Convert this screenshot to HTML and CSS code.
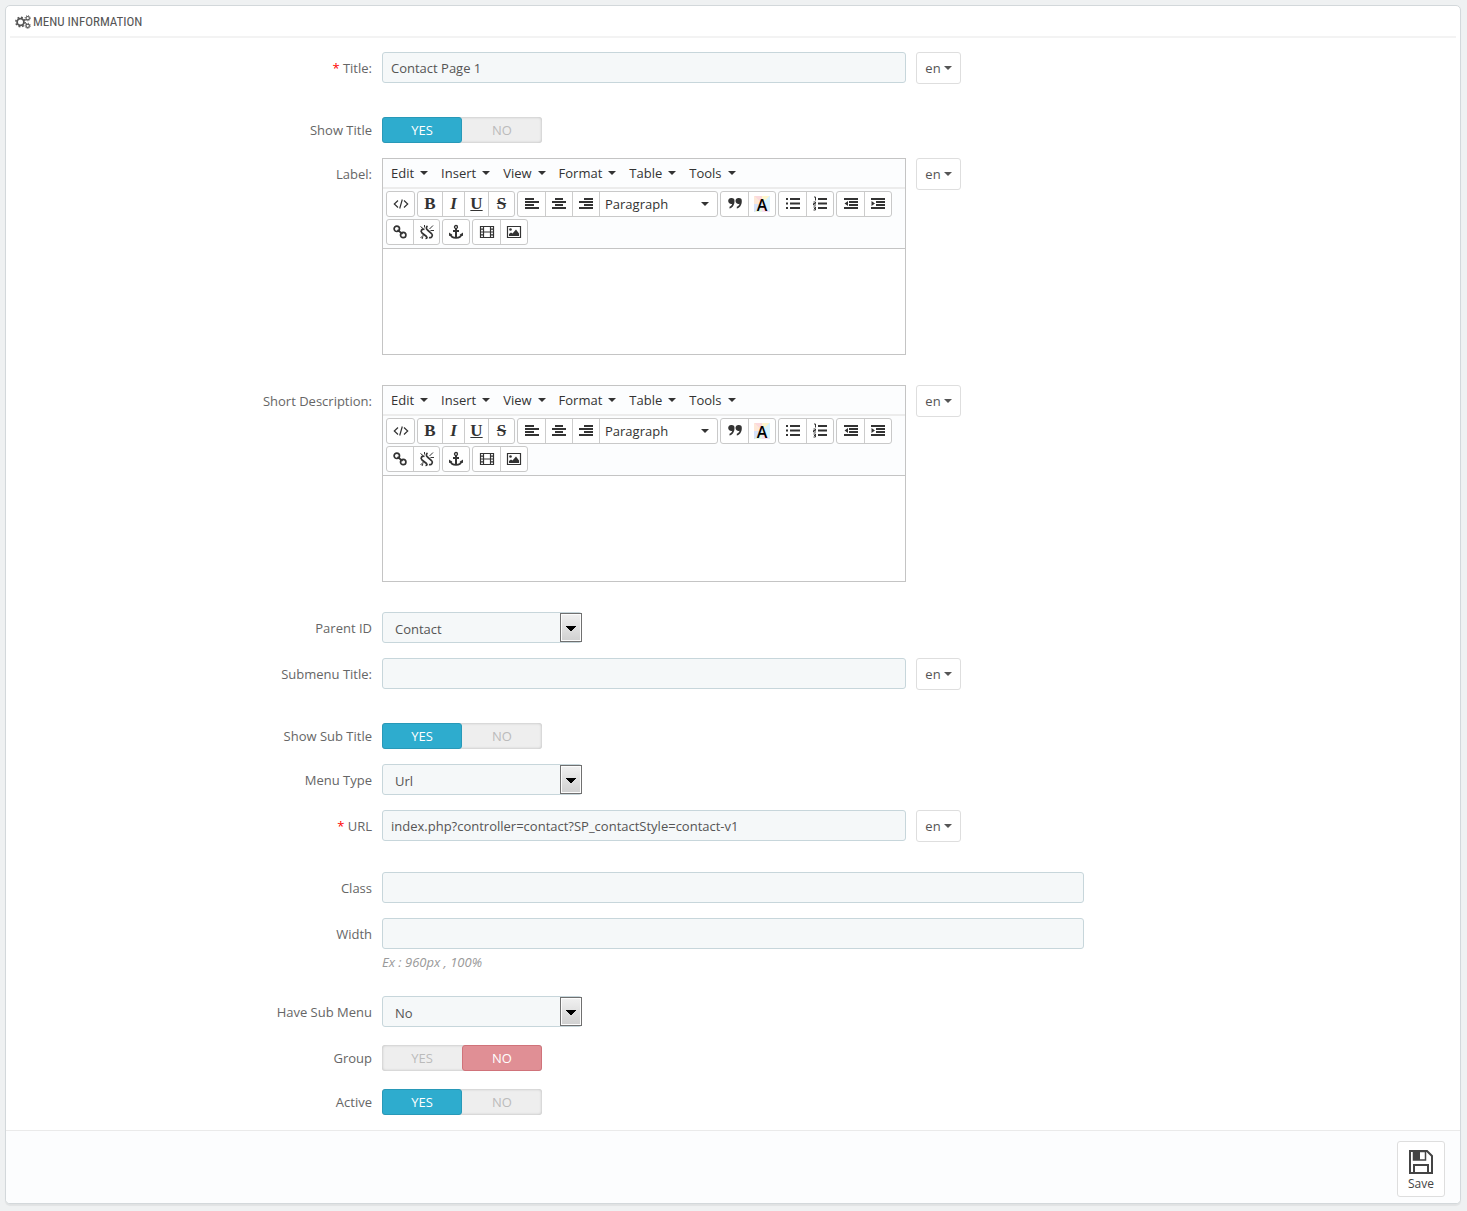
FILE: index.html
```html
<!DOCTYPE html>
<html lang="en">
<head>
<meta charset="utf-8">
<meta name="viewport" content="width=device-width, initial-scale=1">
<title>Menu information</title>
<link rel="stylesheet" href="styles.css">
</head>
<body>
<svg class="sprite" aria-hidden="true">
  <symbol id="i-cogs" viewBox="0 0 16 14">
    <circle cx="5.500" cy="7" r="3.400" fill="none" stroke="currentColor" stroke-width="1.800"/>
    <circle cx="5.500" cy="7" r="4.700" fill="none" stroke="currentColor" stroke-width="1.500" stroke-dasharray="1.850 1.840"/>
    <circle cx="12.700" cy="3.200" r="1.700" fill="none" stroke="currentColor" stroke-width="1.100"/>
    <circle cx="12.700" cy="3.200" r="2.600" fill="none" stroke="currentColor" stroke-width="1" stroke-dasharray="1 1.040"/>
    <circle cx="12.700" cy="10.800" r="1.700" fill="none" stroke="currentColor" stroke-width="1.100"/>
    <circle cx="12.700" cy="10.800" r="2.600" fill="none" stroke="currentColor" stroke-width="1" stroke-dasharray="1 1.040"/>
  </symbol>
  <symbol id="i-code" viewBox="0 0 16 16"><path d="M5 4.500 1.300 8 5 11.500M11 4.500 14.700 8 11 11.500M9.300 3.500 6.700 12.500" fill="none" stroke="currentColor" stroke-width="1.200"/></symbol>
  <symbol id="i-left" viewBox="0 0 16 16"><path d="M1 2h9v2H1zM1 5h14v2H1zM1 8h9v2H1zM1 11h14v2H1z"/></symbol>
  <symbol id="i-center" viewBox="0 0 16 16"><path d="M4 2h8v2H4zM1 5h14v2H1zM4 8h8v2H4zM1 11h14v2H1z"/></symbol>
  <symbol id="i-right" viewBox="0 0 16 16"><path d="M6 2h9v2H6zM1 5h14v2H1zM6 8h9v2H6zM1 11h14v2H1z"/></symbol>
  <symbol id="i-quote" viewBox="0 0 16 16"><path d="M4.500 2a3 3 0 0 1 3 3.200c0 3.800-2.200 6.800-5 7.300v-1.700c1.500-.5 2.500-1.600 2.700-3A3 3 0 1 1 4.500 2zM11.800 2a3 3 0 0 1 3 3.200c0 3.800-2.200 6.800-5 7.300v-1.700c1.500-.5 2.500-1.600 2.700-3a3 3 0 1 1-.7-5.800z"/></symbol>
  <symbol id="i-bullets" viewBox="0 0 16 16"><path d="M1 2h2v2H1zM5 2h10v2H5zM1 6.500h2v2H1zM5 6.500h10v2H5zM1 11h2v2H1zM5 11h10v2H5z"/></symbol>
  <symbol id="i-numbers" viewBox="0 0 16 16"><path d="M6 2h9v2H6zM6 6.500h9v2H6zM6 11h9v2H6z"/><path d="M2 1h1.500v3.500M1.500 6h2v1.500h-2v1.500h2.500M1.500 11h2v1.500h-1.500M3.500 12.500v1.500h-2" fill="none" stroke="currentColor"/></symbol>
  <symbol id="i-outdent" viewBox="0 0 16 16"><path d="M1 2h14v2H1zM6 5h9v2H6zM6 8h9v2H6zM1 11h14v2H1zM5 5v5L1.500 7.500z"/></symbol>
  <symbol id="i-indent" viewBox="0 0 16 16"><path d="M1 2h14v2H1zM6 5h9v2H6zM6 8h9v2H6zM1 11h14v2H1zM1.500 5v5L5 7.500z"/></symbol>
  <symbol id="i-link" viewBox="0 0 16 16"><g fill="none" stroke="currentColor" stroke-width="1.700"><circle cx="4.800" cy="4.800" r="2.700"/><circle cx="11.200" cy="11" r="2.700"/><path d="M5.500 5.800 10.500 10"/></g></symbol>
  <symbol id="i-unlink" viewBox="0 0 16 16"><path d="M5.500 5.500C3 4.500 1 7 3 9l4.500 3.500c1 1 .5 2-1 2M8.500 2C7 3 7 5 8.500 6l4 3.500c2 2 0 5-2.500 4" fill="none" stroke="currentColor" stroke-width="1.700"/><path d="M5.500 1v2.500M1.500 2.500 4 4.500M10.500 5 14 1.500M11.500 6.500H15M5 10.500 1.500 14M4 12.500 3 15" fill="none" stroke="currentColor"/></symbol>
  <symbol id="i-anchor" viewBox="0 0 16 16"><g fill="none" stroke="currentColor"><circle cx="8" cy="3" r="1.500" stroke-width="1.300"/><path d="M8 4.500V14M5 7h6" stroke-width="2"/><path d="M2.300 10c.7 2.800 2.700 3.900 5.700 3.900s5-1.100 5.700-3.900" stroke-width="1.800"/></g><path d="M1 12V8.500L4.500 11zM15 12V8.500L11.500 11z"/></symbol>
  <symbol id="i-film" viewBox="0 0 16 16"><path d="M1.500 2.500h13v11h-13zM4.500 2.500v11M11.500 2.500v11M4.500 8h7M1.500 5.200h3M1.500 8h3M1.500 10.800h3M11.500 5.200h3M11.500 8h3M11.500 10.800h3" fill="none" stroke="currentColor" stroke-width="1.200"/></symbol>
  <symbol id="i-image" viewBox="0 0 16 16"><path d="M1.500 2.500h13v11h-13z" fill="none" stroke="currentColor" stroke-width="1.200"/><circle cx="4.500" cy="5.500" r="1.300"/><path d="M3 12V10l2-1.500 1.500 1L10 5.500l3 4V12z"/></symbol>
  <symbol id="i-save" viewBox="0 0 24 24"><path d="M1 1h17l5 5v17H1z" fill="none" stroke="currentColor" stroke-width="2"/><path d="M4.500 1.500h12V10h-12z" fill="none" stroke="currentColor" stroke-width="1.500"/><path d="M5 2h6v8H5z"/><path d="M5 23v-8h14v8" fill="none" stroke="currentColor" stroke-width="2"/></symbol>
</svg>

<main class="panel">
  <h1 class="panel-heading"><svg class="cogs" aria-hidden="true"><use href="#i-cogs"/></svg>Menu information</h1>

  <form class="form" id="menu-form">
    <div class="group spaced">
      <label class="name" for="title"><span class="required">*</span> Title:</label>
      <div class="field translatable">
        <input class="text" id="title" type="text" value="Contact Page 1">
        <button class="lang" type="button">en<span class="caret"></span></button>
      </div>
    </div>

    <div class="group" role="radiogroup" aria-labelledby="show-title">
      <span class="name" id="show-title">Show Title</span>
      <div class="field"><div class="switch">
        <input type="radio" name="show_title" id="st-yes" checked><label class="yes" for="st-yes">YES</label>
        <input type="radio" name="show_title" id="st-no"><label class="no" for="st-no">NO</label>
      </div></div>
    </div>

    <div class="group spaced">
      <label class="name" for="label-text">Label:</label>
      <div class="field translatable">
        <div class="editor">
          <div class="menubar">
            <button type="button">Edit<span class="caret"></span></button>
            <button type="button">Insert<span class="caret"></span></button>
            <button type="button">View<span class="caret"></span></button>
            <button type="button">Format<span class="caret"></span></button>
            <button type="button">Table<span class="caret"></span></button>
            <button type="button">Tools<span class="caret"></span></button>
          </div>
          <div class="toolbar">
            <div class="tools"><button type="button" aria-label="Source code"><svg><use href="#i-code"/></svg></button></div>
            <div class="tools letters"><button type="button" class="b">B</button><button type="button" class="i">I</button><button type="button" class="u">U</button><button type="button" class="s">S</button></div>
            <div class="tools wide"><button type="button" aria-label="Align left"><svg><use href="#i-left"/></svg></button><button type="button" aria-label="Align center"><svg><use href="#i-center"/></svg></button><button type="button" aria-label="Align right"><svg><use href="#i-right"/></svg></button><button type="button" class="format">Paragraph<span class="caret"></span></button></div>
            <div class="tools"><button type="button" aria-label="Blockquote"><svg><use href="#i-quote"/></svg></button><button type="button" class="color"><span>A</span></button></div>
            <div class="tools"><button type="button" aria-label="Bullet list"><svg><use href="#i-bullets"/></svg></button><button type="button" aria-label="Numbered list"><svg><use href="#i-numbers"/></svg></button></div>
            <div class="tools"><button type="button" aria-label="Decrease indent"><svg><use href="#i-outdent"/></svg></button><button type="button" aria-label="Increase indent"><svg><use href="#i-indent"/></svg></button></div>
            <div class="tools narrow"><button type="button" aria-label="Insert link"><svg><use href="#i-link"/></svg></button><button type="button" aria-label="Remove link"><svg><use href="#i-unlink"/></svg></button></div>
            <div class="tools narrow"><button type="button" aria-label="Anchor"><svg><use href="#i-anchor"/></svg></button></div>
            <div class="tools wide"><button type="button" aria-label="Insert video"><svg><use href="#i-film"/></svg></button><button type="button" aria-label="Insert image"><svg><use href="#i-image"/></svg></button></div>
          </div>
          <textarea id="label-text"></textarea>
        </div>
        <button class="lang" type="button">en<span class="caret"></span></button>
      </div>
    </div>

    <div class="group spaced">
      <label class="name" for="description">Short Description:</label>
      <div class="field translatable">
        <div class="editor">
          <div class="menubar">
            <button type="button">Edit<span class="caret"></span></button>
            <button type="button">Insert<span class="caret"></span></button>
            <button type="button">View<span class="caret"></span></button>
            <button type="button">Format<span class="caret"></span></button>
            <button type="button">Table<span class="caret"></span></button>
            <button type="button">Tools<span class="caret"></span></button>
          </div>
          <div class="toolbar">
            <div class="tools"><button type="button" aria-label="Source code"><svg><use href="#i-code"/></svg></button></div>
            <div class="tools letters"><button type="button" class="b">B</button><button type="button" class="i">I</button><button type="button" class="u">U</button><button type="button" class="s">S</button></div>
            <div class="tools wide"><button type="button" aria-label="Align left"><svg><use href="#i-left"/></svg></button><button type="button" aria-label="Align center"><svg><use href="#i-center"/></svg></button><button type="button" aria-label="Align right"><svg><use href="#i-right"/></svg></button><button type="button" class="format">Paragraph<span class="caret"></span></button></div>
            <div class="tools"><button type="button" aria-label="Blockquote"><svg><use href="#i-quote"/></svg></button><button type="button" class="color"><span>A</span></button></div>
            <div class="tools"><button type="button" aria-label="Bullet list"><svg><use href="#i-bullets"/></svg></button><button type="button" aria-label="Numbered list"><svg><use href="#i-numbers"/></svg></button></div>
            <div class="tools"><button type="button" aria-label="Decrease indent"><svg><use href="#i-outdent"/></svg></button><button type="button" aria-label="Increase indent"><svg><use href="#i-indent"/></svg></button></div>
            <div class="tools narrow"><button type="button" aria-label="Insert link"><svg><use href="#i-link"/></svg></button><button type="button" aria-label="Remove link"><svg><use href="#i-unlink"/></svg></button></div>
            <div class="tools narrow"><button type="button" aria-label="Anchor"><svg><use href="#i-anchor"/></svg></button></div>
            <div class="tools wide"><button type="button" aria-label="Insert video"><svg><use href="#i-film"/></svg></button><button type="button" aria-label="Insert image"><svg><use href="#i-image"/></svg></button></div>
          </div>
          <textarea id="description"></textarea>
        </div>
        <button class="lang" type="button">en<span class="caret"></span></button>
      </div>
    </div>

    <div class="group">
      <label class="name" for="parent">Parent ID</label>
      <div class="field"><div class="select"><select id="parent"><option>Contact</option></select></div></div>
    </div>

    <div class="group spaced">
      <label class="name" for="subtitle">Submenu Title:</label>
      <div class="field translatable">
        <input class="text" id="subtitle" type="text">
        <button class="lang" type="button">en<span class="caret"></span></button>
      </div>
    </div>

    <div class="group" role="radiogroup" aria-labelledby="show-sub">
      <span class="name" id="show-sub">Show Sub Title</span>
      <div class="field"><div class="switch">
        <input type="radio" name="show_sub" id="ss-yes" checked><label class="yes" for="ss-yes">YES</label>
        <input type="radio" name="show_sub" id="ss-no"><label class="no" for="ss-no">NO</label>
      </div></div>
    </div>

    <div class="group">
      <label class="name" for="type">Menu Type</label>
      <div class="field"><div class="select"><select id="type"><option>Url</option></select></div></div>
    </div>

    <div class="group spaced">
      <label class="name" for="url"><span class="required">*</span> URL</label>
      <div class="field translatable">
        <input class="text" id="url" type="text" value="index.php?controller=contact?SP_contactStyle=contact-v1">
        <button class="lang" type="button">en<span class="caret"></span></button>
      </div>
    </div>

    <div class="group">
      <label class="name" for="class">Class</label>
      <div class="field plain"><input class="text" id="class" type="text"></div>
    </div>

    <div class="group">
      <label class="name" for="width">Width</label>
      <div class="field plain">
        <input class="text" id="width" type="text" aria-describedby="width-help">
        <p class="help" id="width-help">Ex : 960px , 100%</p>
      </div>
    </div>

    <div class="group">
      <label class="name" for="submenu">Have Sub Menu</label>
      <div class="field"><div class="select"><select id="submenu"><option>No</option></select></div></div>
    </div>

    <div class="group" role="radiogroup" aria-labelledby="group">
      <span class="name" id="group">Group</span>
      <div class="field"><div class="switch">
        <input type="radio" name="group" id="g-yes"><label class="yes" for="g-yes">YES</label>
        <input type="radio" name="group" id="g-no" checked><label class="no" for="g-no">NO</label>
      </div></div>
    </div>

    <div class="group" role="radiogroup" aria-labelledby="active">
      <span class="name" id="active">Active</span>
      <div class="field"><div class="switch">
        <input type="radio" name="active" id="a-yes" checked><label class="yes" for="a-yes">YES</label>
        <input type="radio" name="active" id="a-no"><label class="no" for="a-no">NO</label>
      </div></div>
    </div>
  </form>

  <footer class="panel-footer">
    <button class="save" type="submit" form="menu-form"><svg aria-hidden="true"><use href="#i-save"/></svg>Save</button>
  </footer>
</main>
</body>
</html>
```
FILE: styles.css
```css
* { box-sizing: border-box; }

body {
  margin: 0;
  padding: 5px 6px 7px 5px;
  background: #eff1f2;
  color: #555;
  font: 13px/18px "Open Sans", sans-serif;
}

button, input, select, textarea { font: inherit; color: inherit; }
button { cursor: pointer; }
svg { fill: currentColor; }
.sprite { display: none; }

.panel {
  overflow: hidden;
  background: #fff;
  border: 1px solid #d3d8db;
  border-radius: 5px;
  box-shadow: 0 2px 1px rgba(0, 0, 0, .06);
}

.panel-heading {
  display: flex;
  align-items: center;
  gap: 2px;
  height: 32px;
  margin: 0 4px;
  padding: 2px 0 0 5px;
  border-bottom: 2px solid #f3f3f3;
  font: 13px/18px "Liberation Sans Narrow", "Roboto Condensed", "Open Sans", sans-serif;
  text-transform: uppercase;
}
.cogs { width: 16px; height: 14px; }

.form { padding: 14px 15px 0; }
.group {
  display: grid;
  grid-template-columns: 25% 1fr;
  margin-bottom: 15px;
}
.group.spaced { margin-bottom: 30px; }

.name {
  padding: 7px 5px 0;
  text-align: right;
  color: #666;
}
.required { color: #f00; }

.field { min-width: 0; padding: 0 5px; }
.field.translatable {
  display: grid;
  grid-template-columns: 50% 1fr;
  align-items: start;
  justify-items: start;
  padding: 0;
}
.translatable > * { margin-left: 5px; }
.plain { width: calc(200% / 3); }

.text {
  display: block;
  width: 100%;
  height: 31px;
  padding: 0 8px;
  background: #f5f8f9;
  border: 1px solid #c7d6db;
  border-radius: 3px;
}
.translatable > .text,
.translatable > .editor { width: calc(100% - 10px); }

.lang {
  display: flex;
  align-items: center;
  justify-content: center;
  gap: 3px;
  width: 45px;
  height: 32px;
  padding: 0;
  background: #fff;
  border: 1px solid #dedede;
  border-radius: 3px;
}
.caret {
  border: 4px solid transparent;
  border-top-color: currentColor;
  border-bottom: 0;
}

.switch {
  display: flex;
  width: 160px;
  height: 26px;
  margin-top: 3px;
  background: #eee;
  border-radius: 3px;
  box-shadow: inset 0 0 3px rgba(0, 0, 0, .25);
}
.switch input {
  appearance: none;
  width: 0;
  height: 0;
  margin: 0;
}
.switch label {
  flex: 1;
  border: 1px solid transparent;
  border-radius: 3px;
  color: #bbb;
  line-height: 25px;
  text-align: center;
}
.switch input:checked + label { color: #fff; }
.switch input:checked + .yes { background: #2eacce; border-color: #2899b8; }
.switch input:checked + .no { background: #e08f95; border-color: #d0737a; }

.select {
  display: grid;
  grid-template-columns: 1fr 22px;
  width: 200px;
  max-width: 100%;
  height: 31px;
}
.select select {
  grid-area: 1 / 1 / 2 / 3;
  appearance: none;
  padding: 3px 12px 0;
  background: #f5f8f9;
  border: 1px solid #c7d6db;
  border-radius: 3px;
}
.select::after {
  content: "";
  grid-area: 1 / 2;
  margin: 1px 0;
  background:
    linear-gradient(#000, #000) center 13px / 10px 1px no-repeat,
    linear-gradient(#000, #000) center 14px / 8px 1px no-repeat,
    linear-gradient(#000, #000) center 15px / 6px 1px no-repeat,
    linear-gradient(#000, #000) center 16px / 4px 1px no-repeat,
    linear-gradient(#000, #000) center 17px / 2px 1px no-repeat,
    linear-gradient(#f2f2f2, #cfcfcf);
  background-origin: border-box;
  border: 1px solid #707070;
  box-shadow: inset 0 0 0 1px #fcfcfc;
  pointer-events: none;
}

.help {
  margin: 4px 0 0;
  padding-bottom: 10px;
  color: #999;
  font-style: italic;
}

.editor {
  background: #fcfdfe;
  border: 1px solid #c4c4c4;
  color: #333;
}
.menubar {
  display: flex;
  height: 30px;
  border-bottom: 2px solid #ececec;
}
.menubar button {
  display: flex;
  align-items: center;
  gap: 6px;
  padding: 0 5px 0 8px;
  background: none;
  border: 0;
}
.toolbar {
  display: flex;
  flex-wrap: wrap;
  gap: 2px;
  padding: 2px 3px 3px;
  border-bottom: 1px solid #c4c4c4;
}
.tools {
  display: flex;
  height: 26px;
  background: #fff;
  border: 1px solid #c9c9c9;
  border-radius: 3px;
}
.tools button {
  display: flex;
  align-items: center;
  justify-content: center;
  width: 27px;
  padding: 0;
  background: none;
  border: 0;
}
.tools button + button { border-left: 1px solid #ccc; }
.tools svg { width: 16px; height: 16px; }
.tools.narrow button { width: 26px; }
.tools.letters button { width: 24px; font: bold 17px/20px "Liberation Serif", serif; }
.tools.letters .i { width: 22px; font-style: italic; }
.letters .u { text-decoration: underline; }
.tools.letters .s { width: 26px; text-decoration: line-through; }
.tools.wide .format {
  justify-content: space-between;
  width: 118px;
  padding: 0 8px 0 5px;
}
.color span {
  width: 16px;
  height: 16px;
  background: conic-gradient(#fff6cc 12%, #d9f4ff 0 38%, #fadcf2 0 50%, #e6f8e0 0 62%, #d5e2fb 0 75%, #fde8d8 0 88%, #fbd9dc 0);
  color: #000;
  font-weight: 600;
  font-size: 16px;
  line-height: 18px;
}
.editor textarea {
  display: block;
  width: 100%;
  height: 105px;
  padding: 8px;
  background: #fff;
  border: 0;
  resize: none;
}

.panel-footer {
  display: flex;
  justify-content: flex-end;
  padding: 10px 15px 6px;
  background: #fcfdfe;
  border-top: 1px solid #eaeaea;
}
.save {
  display: flex;
  flex-direction: column;
  align-items: center;
  gap: 1px;
  width: 48px;
  height: 56px;
  padding: 8px 0 0;
  background: #fff;
  border: 1px solid #dedede;
  border-radius: 3px;
  color: #444;
  font-size: 12px;
}
.save svg { width: 24px; height: 24px; }
```
